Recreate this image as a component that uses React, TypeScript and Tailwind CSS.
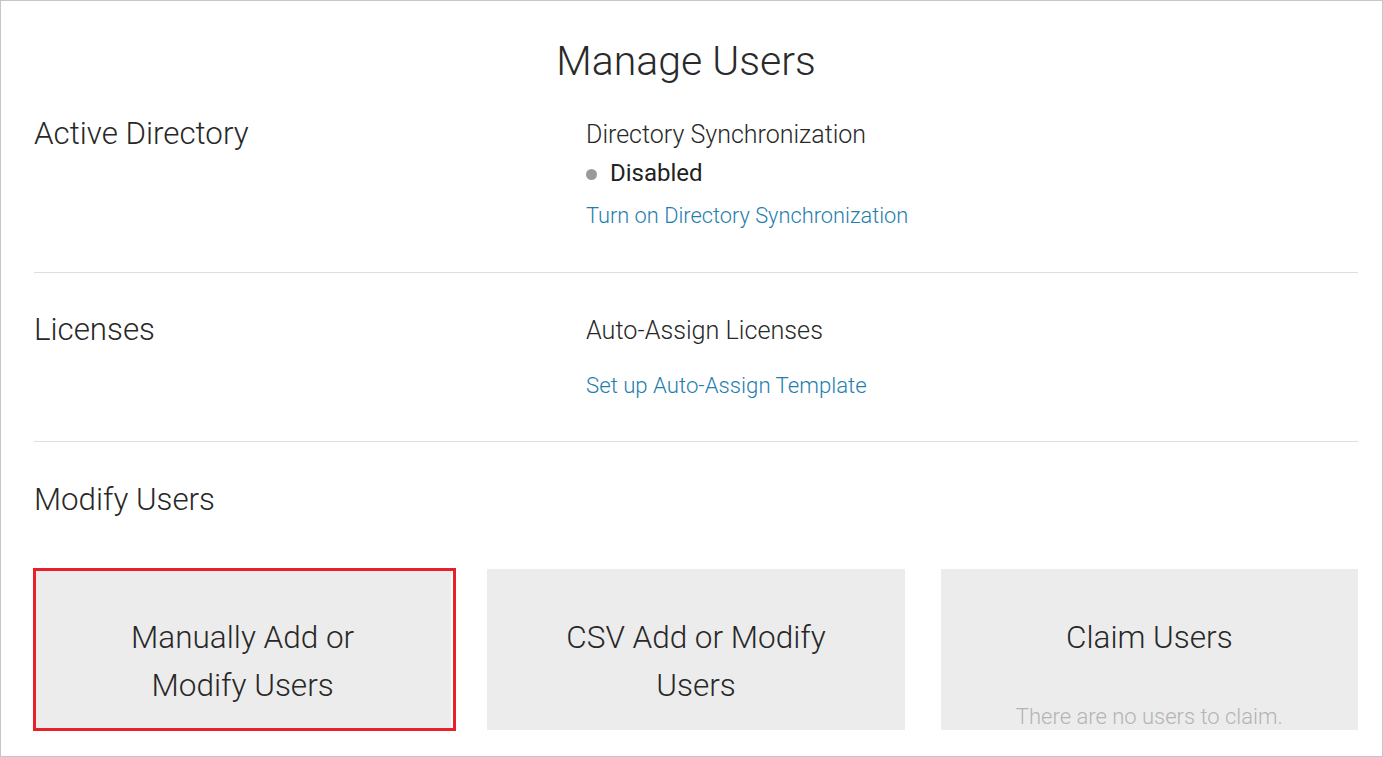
const font = { fontFamily: "Roboto, 'Liberation Sans', Arial, sans-serif" }

function ActionCard({
  lines,
  note,
  selected,
}: {
  lines: string[]
  note?: string
  selected?: boolean
}) {
  return (
    <div className="relative flex h-[161px] flex-col items-center bg-[#ececec] pt-[45px] text-center">
      {lines.map((line) => (
        <div key={line} className="text-[31.5px] font-light leading-[48px] text-[#282828]">
          {line}
        </div>
      ))}
      {note && (
        <div className="mt-[42px] text-[22px] font-light leading-[26px] text-[#b4b4b4]">{note}</div>
      )}
      {/* highlight frame */}
      {selected && (
        <div className="pointer-events-none absolute -top-[1px] -bottom-[1px] -left-[1px] -right-[5px] border-[3px] border-[#e8202a]" />
      )}
    </div>
  )
}

export default function App() {
  return (
    <div
      style={font}
      className="h-[757px] w-[1383px] overflow-hidden border border-[#c6c6c6] bg-white pl-[33px] pr-[24px] text-[#282828]"
    >
      {/* Title */}
      <h1 className="pt-[36px] pr-[20px] text-center text-[41px] font-light leading-[48px] text-[#2a2a2a]">
        Manage Users
      </h1>

      {/* Active Directory */}
      <section className="grid grid-cols-[552px_1fr] border-b border-[#dedede] pt-[29px] pb-[42px]">
        <h2 className="text-[31.3px] font-light leading-[40px]">Active Directory</h2>
        <div className="mt-[5px] flex flex-col">
          <div className="text-[25px] font-light leading-[32px]">Directory Synchronization</div>
          <div className="mt-[6px] flex h-[32px] items-center">
            <span className="mt-[2px] h-[11px] w-[11px] rounded-full bg-[#9a9a9a]" />
            <span className="ml-[13px] text-[24px] font-normal leading-[32px] text-[#222]">Disabled</span>
          </div>
          <a className="mt-[13px] self-start text-[21.8px] font-light leading-[28px] text-[#1f80ad]" href="#">
            Turn on Directory Synchronization
          </a>
        </div>
      </section>

      {/* Licenses */}
      <section className="grid grid-cols-[552px_1fr] border-b border-[#dedede] pt-[37px] pb-[42px]">
        <h2 className="text-[31.3px] font-light leading-[40px]">Licenses</h2>
        <div className="mt-[5px] flex flex-col">
          <div className="text-[25.2px] font-light leading-[32px]">Auto-Assign Licenses</div>
          <a className="mt-[24px] self-start text-[22.2px] font-light leading-[28px] text-[#1f80ad]" href="#">
            Set up Auto-Assign Template
          </a>
        </div>
      </section>

      {/* Modify Users */}
      <section className="pt-[38px]">
        <h2 className="text-[31.3px] font-light leading-[40px]">Modify Users</h2>
        <div className="mt-[49px] grid grid-cols-3 gap-[36px]">
          <ActionCard lines={["Manually Add or", "Modify Users"]} selected />
          <ActionCard lines={["CSV Add or Modify", "Users"]} />
          <ActionCard lines={["Claim Users"]} note="There are no users to claim." />
        </div>
      </section>
    </div>
  )
}
